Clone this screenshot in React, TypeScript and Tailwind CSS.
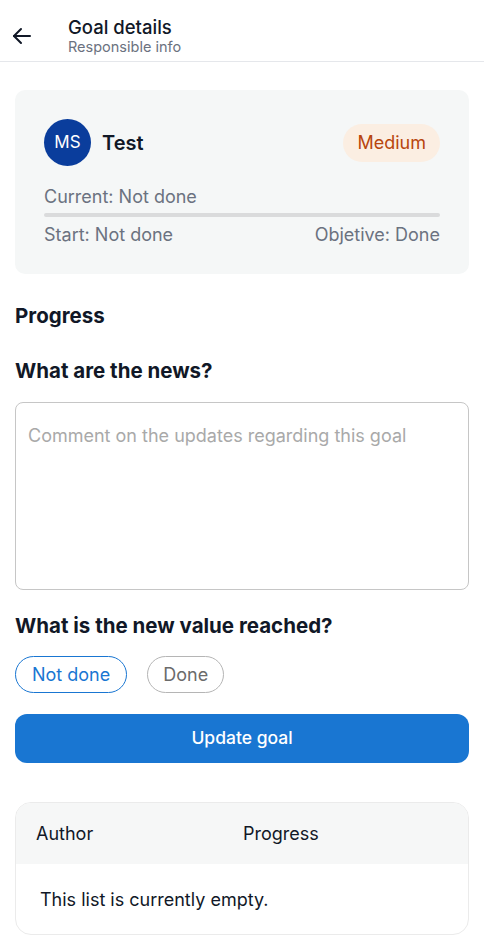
import React from 'react'

const font = { fontFamily: 'Inter, "Noto Sans", sans-serif' }

const BackArrow = () => (
  <svg width="24" height="24" viewBox="0 0 24 24" fill="none" stroke="#111827" strokeWidth="2" strokeLinecap="round" strokeLinejoin="round">
    <path d="M20 12H4" />
    <path d="M11 5l-7 7 7 7" />
  </svg>
)

const GoalCard = () => (
  <div className="mx-[15px] mt-[28px] rounded-[10px] bg-[#f5f7f7] px-[29px] pt-[29px] pb-[28px]">
    <div className="flex items-center justify-between">
      <div className="flex items-center gap-[11px]">
        <div className="flex h-[47px] w-[47px] items-center justify-center rounded-full bg-[#0a3d9c] text-[17px] text-white">MS</div>
        <span className="text-[20px] font-semibold text-[#111827]">Test</span>
      </div>
      <span className="flex h-[38px] items-center rounded-full bg-[#fbeee2] px-[14px] text-[18px] text-[#b8450d]">Medium</span>
    </div>
    <div className="mt-[20px] text-[18px] leading-[22px] text-[#6b7280]">Current: Not done</div>
    <div className="mt-[5px] h-[4px] w-full rounded-full bg-[#dadbdc]" />
    <div className="mt-[7px] flex justify-between text-[18px] leading-[22px] text-[#6b7280]">
      <span>Start: Not done</span>
      <span>Objetive: Done</span>
    </div>
  </div>
)

const pillOn = 'h-[37px] rounded-full border border-[#1976d2] px-[16px] text-[18px] text-[#1976d2]'
const pillOff = 'h-[37px] rounded-full border border-[#b5b5b5] px-[15px] text-[18px] text-[#6b6b6b]'

export default function App() {
  const [value, setValue] = React.useState<'not' | 'done'>('not')

  return (
    <div className="min-h-screen w-full bg-white" style={font}>
      <header className="flex h-[62px] items-center border-b border-[#e5e7eb] pt-[10px]">
        <div className="flex w-[68px] justify-start pl-[10px]">
          <BackArrow />
        </div>
        <div className="flex flex-col">
          <span className="text-[18.5px] leading-[22px] font-medium text-[#111827]">Goal details</span>
          <span className="text-[14.5px] leading-[18px] text-[#6b7280]">Responsible info</span>
        </div>
      </header>

      <GoalCard />

      <div className="px-[15px]">
        <h2 className="mt-[29px] text-[20.5px] leading-[26px] font-bold text-[#111827]">Progress</h2>
        <h3 className="mt-[30px] text-[20.5px] leading-[24px] font-bold text-[#111827]">What are the news?</h3>
        <textarea
          className="mt-[19px] block h-[188px] w-full resize-none rounded-[8px] border border-[#c6c6c6] px-[12px] py-[22px] text-[18px] leading-[22px] text-[#111827] outline-none placeholder:text-[#a9a9a9]"
          placeholder="Comment on the updates regarding this goal"
          style={font}
        />
        <h3 className="mt-[24px] text-[20.5px] leading-[24px] font-bold text-[#111827]">What is the new value reached?</h3>
        <div className="mt-[18px] flex gap-[20px]">
          <button onClick={() => setValue('not')} className={value === 'not' ? pillOn : pillOff}>
            Not done
          </button>
          <button onClick={() => setValue('done')} className={value === 'done' ? pillOn : pillOff}>
            Done
          </button>
        </div>
        <button className="mt-[21px] flex h-[49px] w-full items-center justify-center rounded-[12px] bg-[#1976d2] text-[17.5px] font-medium text-white">
          Update goal
        </button>

        <div className="mt-[39px] overflow-hidden rounded-[16px] border border-[#ebebeb]">
          <div className="flex h-[61px] items-center bg-[#f6f7f7] text-[18px] text-[#111827]">
            <span className="w-[227px] pl-[20px]">Author</span>
            <span>Progress</span>
          </div>
          <div className="flex h-[70px] items-center pl-[24px] text-[18px] text-[#111827]">This list is currently empty.</div>
        </div>
      </div>
    </div>
  )
}
